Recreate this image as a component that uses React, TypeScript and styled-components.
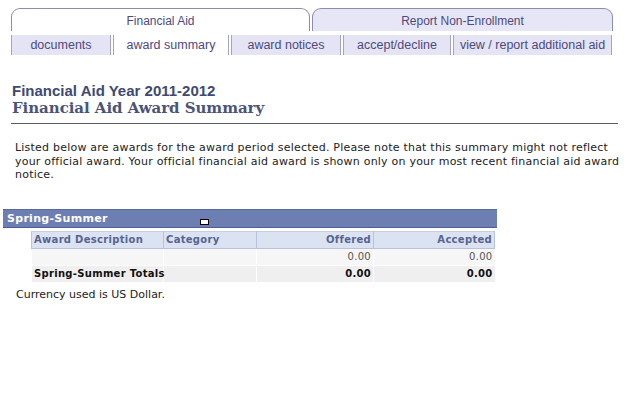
import React from 'react';
import styled, { createGlobalStyle } from 'styled-components';

const GlobalStyle = createGlobalStyle`
  html, body {
    margin: 0;
    padding: 0;
    background: #ffffff;
  }
  body {
    font-family: "DejaVu Sans", Verdana, sans-serif;
  }
`;

const subTabs = [
  { label: 'documents', width: 100 },
  { label: 'award summary', width: 116, current: true },
  { label: 'award notices', width: 110 },
  { label: 'accept/decline', width: 108 },
  { label: 'view / report additional aid', width: 159 },
];

const columns = [
  { label: 'Award Description', width: 132, right: false },
  { label: 'Category', width: 93, right: false },
  { label: 'Offered', width: 117, right: true },
  { label: 'Accepted', width: 121, right: true },
];

const rows = [
  { description: '', category: '', offered: '0.00', accepted: '0.00', total: false },
  { description: 'Spring-Summer Totals', category: '', offered: '0.00', accepted: '0.00', total: true },
];

const App = () => {
  return (
    <Page>
      <GlobalStyle />
      <TabBar>
        <TopTab $current $width={299}>Financial Aid</TopTab>
        <TopTab $width={301}>Report Non-Enrollment</TopTab>
      </TabBar>
      <SubTabBar>
        {subTabs.map((tab) => (
          <SubTab key={tab.label} $current={!!tab.current} $width={tab.width}>
            {tab.label}
          </SubTab>
        ))}
      </SubTabBar>

      <Header>
        <YearTitle>Financial Aid Year 2011-2012</YearTitle>
        <PageTitle>Financial Aid Award Summary</PageTitle>
      </Header>

      <Intro>
        Listed below are awards for the award period selected. Please note that this summary might not reflect
        your official award. Your official financial aid award is shown only on your most recent financial aid award
        notice.
      </Intro>

      <Section>
        <SectionBar>
          Spring-Summer
          <Marker />
        </SectionBar>
        <AwardTable>
          <colgroup>
            {columns.map((col) => (
              <col key={col.label} style={{ width: col.width }} />
            ))}
          </colgroup>
          <thead>
            <tr>
              {columns.map((col) => (
                <HeadCell key={col.label} $right={col.right}>
                  {col.label}
                </HeadCell>
              ))}
            </tr>
          </thead>
          <tbody>
            {rows.map((row, i) => (
              <Row key={i} $total={row.total}>
                <Cell>{row.description}</Cell>
                <Cell>{row.category}</Cell>
                <Cell $right>{row.offered}</Cell>
                <Cell $right>{row.accepted}</Cell>
              </Row>
            ))}
          </tbody>
        </AwardTable>
        <Note>Currency used is US Dollar.</Note>
      </Section>
    </Page>
  );
};

const Page = styled.div`
  width: 640px;
  height: 400px;
  overflow: hidden;
`;

const TabBar = styled.div`
  display: flex;
  gap: 2px;
  padding: 8px 0 0 11px;
`;

const TopTab = styled.div<{ $current?: boolean; $width: number }>`
  width: ${(p) => p.$width}px;
  height: 23px;
  box-sizing: border-box;
  border: 1px solid #8e8cab;
  border-bottom: none;
  border-radius: 9px 9px 0 0;
  background: ${(p) => (p.$current ? '#ffffff' : '#e6e6f6')};
  color: #4e4a80;
  font-family: "Liberation Sans", Arial, sans-serif;
  font-size: 12px;
  text-align: center;
  line-height: 24px;
`;

const SubTabBar = styled.div`
  display: flex;
  gap: 2px;
  padding: 4px 0 0 11px;
`;

const SubTab = styled.div<{ $current: boolean; $width: number }>`
  width: ${(p) => p.$width}px;
  height: 20px;
  box-sizing: border-box;
  border-left: 1px solid #a5a3bf;
  border-right: 1px solid #a5a3bf;
  background: ${(p) => (p.$current ? '#ffffff' : '#e4e4f4')};
  color: #4e4a80;
  font-family: "Liberation Sans", Arial, sans-serif;
  font-size: 12.5px;
  text-align: center;
  line-height: 21px;
  white-space: nowrap;
`;

const Header = styled.div`
  margin: 27px 22px 0 11px;
  padding: 0 0 5px 1px;
  border-bottom: 1px solid #5a5f6e;
`;

const YearTitle = styled.div`
  font-family: "Liberation Sans", Arial, sans-serif;
  font-weight: bold;
  font-size: 15px;
  line-height: 17px;
  color: #3e4a72;
`;

const PageTitle = styled.div`
  font-family: "DejaVu Serif", Georgia, serif;
  font-weight: bold;
  font-size: 15px;
  letter-spacing: -0.05px;
  line-height: 19px;
  color: #4b5476;
`;

const Intro = styled.p`
  margin: 17px 4px 0 15px;
  font-size: 11px;
  letter-spacing: 0.22px;
  line-height: 13.5px;
  color: #222222;
`;

const Section = styled.div`
  margin-top: 27px;
`;

const SectionBar = styled.div`
  position: relative;
  margin-left: 3px;
  width: 494px;
  height: 19px;
  box-sizing: border-box;
  background: #6d7eb2;
  border-top: 1px solid #5a6a9c;
  border-bottom: 1px solid #4f5d8f;
  color: #ffffff;
  font-weight: bold;
  font-size: 11px;
  letter-spacing: 0.3px;
  line-height: 17px;
  padding-left: 4px;
`;

const Marker = styled.span`
  position: absolute;
  left: 197px;
  top: 9px;
  width: 7px;
  height: 4px;
  background: #ffffff;
  border: 1px solid #000000;
`;

const AwardTable = styled.table`
  margin: 3px 0 0 31px;
  width: 463px;
  table-layout: fixed;
  border-collapse: collapse;
  font-size: 10px;
`;

const HeadCell = styled.th<{ $right?: boolean }>`
  height: 16px;
  padding: 0 2px;
  background: #dbe2f1;
  border: 1px solid #b8c2da;
  border-top-color: #c6cee3;
  color: #57648f;
  text-align: ${(p) => (p.$right ? 'right' : 'left')};
  font-weight: bold;
  letter-spacing: 0.3px;
  line-height: 14px;
  white-space: nowrap;
`;

const Row = styled.tr<{ $total: boolean }>`
  background: ${(p) => (p.$total ? '#efefef' : '#f6f6f6')};
  font-weight: ${(p) => (p.$total ? 'bold' : 'normal')};
  color: ${(p) => (p.$total ? '#111111' : '#555555')};
`;

const Cell = styled.td<{ $right?: boolean }>`
  height: 16px;
  padding: 0 2px;
  border-left: 1px solid #ffffff;
  border-bottom: 1px solid #ffffff;
  text-align: ${(p) => (p.$right ? 'right' : 'left')};
  letter-spacing: 0.3px;
  line-height: 14px;
  white-space: nowrap;
`;

const Note = styled.div`
  margin: 5px 0 0 16px;
  font-size: 11px;
  color: #222222;
`;

export default App;
